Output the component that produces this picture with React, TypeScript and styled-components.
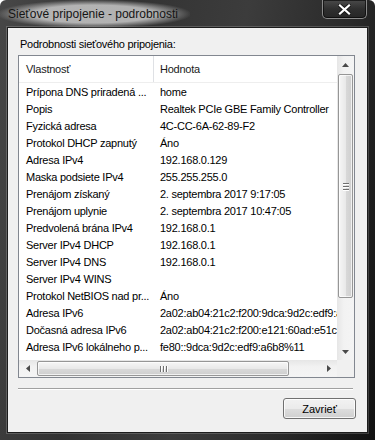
import styled, { createGlobalStyle } from "styled-components";

const GlobalStyle = createGlobalStyle`
    html, body {
        margin: 0;
        padding: 0;
        background: #ffffff;
    }
    body {
        font-family: "Liberation Sans", Arial, sans-serif;
    }
    * {
        box-sizing: border-box;
    }
`;

const Window = styled.div`
    width: 375px;
    height: 440px;
    display: flex;
    flex-direction: column;
    padding: 0 7px 7px 7px;
    overflow: hidden;
    border-radius: 6px 6px 0 0;
    background: linear-gradient(
        100deg,
        #474747 0%,
        #333333 30%,
        #3c3c3c 55%,
        #2a2a2a 78%,
        #111111 100%
    );
`;

const TitleBar = styled.div`
    height: 27px;
    flex-shrink: 0;
    display: flex;
    justify-content: space-between;
    align-items: flex-start;
`;

const Caption = styled.span`
    position: relative;
    margin: 7px 0 0 1px;
    font-size: 12px;
    line-height: 15px;
    color: #151515;
    white-space: nowrap;
    &::before {
        content: "";
        position: absolute;
        inset: -7px -12px -6px -10px;
        z-index: 0;
        background: radial-gradient(
            ellipse at center,
            rgba(200, 200, 200, 0.85) 45%,
            rgba(160, 160, 160, 0) 72%
        );
    }
    & span {
        position: relative;
    }
`;

const CloseButton = styled.div`
    width: 45px;
    height: 19px;
    margin-right: 1px;
    display: flex;
    align-items: center;
    justify-content: center;
    border: 1px solid #8a8a8a;
    border-top: none;
    border-radius: 0 0 5px 5px;
    background: linear-gradient(#4a4a4a, #2f2f2f 50%, #262626);
    box-shadow: inset 0 0 0 1px rgba(0, 0, 0, 0.6);
`;

const Panel = styled.div`
    flex: 1;
    display: flex;
    flex-direction: column;
    padding: 9px 12px 0 10px;
    background: #f0f0f0;
    border: 1px solid #1c1c1c;
    box-shadow: 0 0 0 1px rgba(255, 255, 255, 0.18);
`;

const Label = styled.div`
    margin: 0 0 3px 2px;
    font-size: 11px;
    letter-spacing: -0.25px;
    line-height: 15px;
    color: #000;
`;

const ListBox = styled.div`
    height: 323px;
    display: grid;
    grid-template-columns: 1fr 17px;
    grid-template-rows: 1fr 17px;
    border: 1px solid #828790;
    background: #ffffff;
`;

const ListContent = styled.div`
    overflow: hidden;
    font-size: 11px;
    letter-spacing: -0.25px;
    color: #000;
`;

const HeaderRow = styled.div`
    display: flex;
    height: 27px;
    background: #ffffff;
    border-bottom: 1px solid #eeeeee;
`;

const Row = styled.div`
    display: flex;
    height: 17px;
    align-items: center;
    white-space: nowrap;
`;

const Cell = styled.div<{ $first?: boolean; $header?: boolean }>`
    flex: ${(p) => (p.$first ? "0 0 135px" : "1 0 auto")};
    display: flex;
    align-items: center;
    padding-left: ${(p) => (p.$first ? "7px" : "6px")};
    border-right: ${(p) =>
        p.$first && p.$header ? "1px solid #dfe1e5" : "none"};
    color: ${(p) => (p.$header ? "#1a1a1a" : "#000")};
    white-space: nowrap;
    overflow: hidden;
`;

const VScroll = styled.div`
    display: flex;
    flex-direction: column;
    background: linear-gradient(to right, #e6e6e6, #f2f2f2 40%, #f4f4f4);
`;

const HScroll = styled.div`
    display: flex;
    background: linear-gradient(#e6e6e6, #f2f2f2 40%, #f4f4f4);
`;

const ArrowButton = styled.div`
    flex: 0 0 17px;
    height: 17px;
    width: 17px;
    display: flex;
    align-items: center;
    justify-content: center;
`;

const Thumb = styled.div<{ $vertical?: boolean }>`
    display: flex;
    align-items: center;
    justify-content: center;
    gap: 2px;
    flex-direction: ${(p) => (p.$vertical ? "column" : "row")};
    margin: ${(p) => (p.$vertical ? "1px 1px 0 1px" : "1px 0 1px 1px")};
    border: 1px solid #969696;
    border-radius: 2px;
    background: ${(p) =>
        p.$vertical
            ? "linear-gradient(to right, #f6f6f6, #e9e9e9 50%, #d9d9d9 51%, #cfcfcf)"
            : "linear-gradient(#f6f6f6, #e9e9e9 50%, #d9d9d9 51%, #cfcfcf)"};
    box-shadow: inset 0 0 0 1px rgba(255, 255, 255, 0.7);
`;

const GripLine = styled.div<{ $vertical?: boolean }>`
    width: ${(p) => (p.$vertical ? "6px" : "1px")};
    height: ${(p) => (p.$vertical ? "1px" : "6px")};
    background: #6f6f6f;
    box-shadow: ${(p) => (p.$vertical ? "0 1px 0 #fff" : "1px 0 0 #fff")};
`;

const Spacer = styled.div`
    flex: 1;
`;

const Corner = styled.div`
    background: #f0f0f0;
`;

const Separator = styled.div`
    margin: 10px 2px 0 0;
    height: 2px;
    border-top: 1px solid #a0a0a0;
    border-bottom: 1px solid #ffffff;
`;

const Footer = styled.div`
    display: flex;
    justify-content: flex-end;
    margin: 8px -1px 0 0;
`;

const Button = styled.button`
    width: 73px;
    height: 21px;
    padding: 0;
    font-family: "Liberation Sans", Arial, sans-serif;
    font-size: 11px;
    color: #000;
    border: 1px solid #707070;
    border-radius: 3px;
    background: linear-gradient(#f2f2f2, #ebebeb 50%, #dddddd 51%, #cfcfcf);
    box-shadow: inset 0 0 0 1px rgba(255, 255, 255, 0.8);
`;

type Arrow = "up" | "down" | "left" | "right";

const ArrowIcon = ({ dir }: { dir: Arrow }) => {
    const points = {
        up: "0,4 3.5,0 7,4",
        down: "0,0 3.5,4 7,0",
        left: "4,0 0,3.5 4,7",
        right: "0,0 4,3.5 0,7",
    }[dir];
    const vertical = dir === "up" || dir === "down";
    return (
        <svg width={vertical ? 7 : 4} height={vertical ? 4 : 7}>
            <polygon points={points} fill="#4a4a4a" />
        </svg>
    );
};

const rows: [string, string][] = [
    ["Prípona DNS priradená ...", "home"],
    ["Popis", "Realtek PCIe GBE Family Controller"],
    ["Fyzická adresa", "4C-CC-6A-62-89-F2"],
    ["Protokol DHCP zapnutý", "Áno"],
    ["Adresa IPv4", "192.168.0.129"],
    ["Maska podsiete IPv4", "255.255.255.0"],
    ["Prenájom získaný", "2. septembra 2017 9:17:05"],
    ["Prenájom uplynie", "2. septembra 2017 10:47:05"],
    ["Predvolená brána IPv4", "192.168.0.1"],
    ["Server IPv4 DHCP", "192.168.0.1"],
    ["Server IPv4 DNS", "192.168.0.1"],
    ["Server IPv4 WINS", ""],
    ["Protokol NetBIOS nad pr...", "Áno"],
    ["Adresa IPv6", "2a02:ab04:21c2:f200:9dca:9d2c:edf9:a6b8"],
    ["Dočasná adresa IPv6", "2a02:ab04:21c2:f200:e121:60ad:e51c:3b2f"],
    ["Adresa IPv6 lokálneho p...", "fe80::9dca:9d2c:edf9:a6b8%11"],
    ["Predvolená brána IPv6", "fe80::5007:54ff:fe4a:b1e4%11"],
];

const App = () => {
    return (
        <>
            <GlobalStyle />
            <Window>
                <TitleBar>
                    <Caption>
                        <span>Sieťové pripojenie - podrobnosti</span>
                    </Caption>
                    <CloseButton>
                        <svg width="13" height="11" viewBox="0 0 13 11">
                            <path
                                d="M2 1.5 L11 9.5 M11 1.5 L2 9.5"
                                stroke="#1a1a1a"
                                strokeWidth="4"
                                strokeLinecap="square"
                            />
                            <path
                                d="M2 1.5 L11 9.5 M11 1.5 L2 9.5"
                                stroke="#ffffff"
                                strokeWidth="2.2"
                                strokeLinecap="square"
                            />
                        </svg>
                    </CloseButton>
                </TitleBar>
                <Panel>
                    <Label>Podrobnosti sieťového pripojenia:</Label>
                    <ListBox>
                        <ListContent>
                            <HeaderRow>
                                <Cell $first $header>
                                    Vlastnosť
                                </Cell>
                                <Cell $header>Hodnota</Cell>
                            </HeaderRow>
                            {rows.map(([name, value]) => (
                                <Row key={name}>
                                    <Cell $first>{name}</Cell>
                                    <Cell>{value}</Cell>
                                </Row>
                            ))}
                        </ListContent>
                        <VScroll>
                            <ArrowButton>
                                <ArrowIcon dir="up" />
                            </ArrowButton>
                            <Thumb $vertical style={{ height: 224 }}>
                                <GripLine $vertical />
                                <GripLine $vertical />
                                <GripLine $vertical />
                            </Thumb>
                            <Spacer />
                            <ArrowButton>
                                <ArrowIcon dir="down" />
                            </ArrowButton>
                        </VScroll>
                        <HScroll>
                            <ArrowButton>
                                <ArrowIcon dir="left" />
                            </ArrowButton>
                            <Thumb style={{ width: 252 }}>
                                <GripLine />
                                <GripLine />
                                <GripLine />
                            </Thumb>
                            <Spacer />
                            <ArrowButton>
                                <ArrowIcon dir="right" />
                            </ArrowButton>
                        </HScroll>
                        <Corner />
                    </ListBox>
                    <Separator />
                    <Footer>
                        <Button>Zavrieť</Button>
                    </Footer>
                </Panel>
            </Window>
        </>
    );
};

export default App;
